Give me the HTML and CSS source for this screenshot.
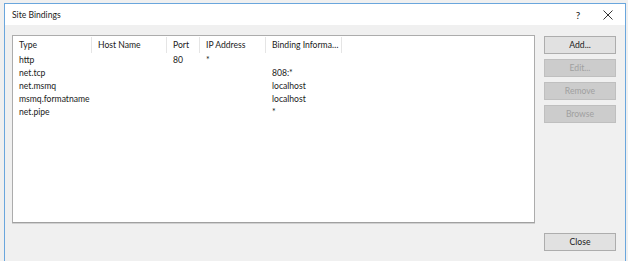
FILE: index.html
```html
<!DOCTYPE html>
<html lang="en">
<head>
    <meta charset="UTF-8">
    <title>Site Bindings</title>
    <link rel="stylesheet" href="styles.css">
</head>
<body>
    <div class="dialog">
        <div class="title-bar">
            <span class="title">Site Bindings</span>
            <span class="title-btn help">?</span>
            <span class="title-btn close-x">
                <svg width="10" height="10" viewBox="0 0 10 10"><path d="M0.5 0.5 L9.5 9.5 M9.5 0.5 L0.5 9.5" stroke="#333" stroke-width="1" fill="none"/></svg>
            </span>
        </div>
        <div class="body">
            <div class="main-row">
                <div class="list">
                    <div class="row header">
                        <span class="col c-type">Type</span>
                        <span class="col c-host">Host Name</span>
                        <span class="col c-port">Port</span>
                        <span class="col c-ip">IP Address</span>
                        <span class="col c-bind">Binding Informa…</span>
                    </div>
                    <div class="row"><span class="col c-type">http</span><span class="col c-host"></span><span class="col c-port">80</span><span class="col c-ip">*</span><span class="col c-bind"></span></div>
                    <div class="row"><span class="col c-type">net.tcp</span><span class="col c-host"></span><span class="col c-port"></span><span class="col c-ip"></span><span class="col c-bind">808:*</span></div>
                    <div class="row"><span class="col c-type">net.msmq</span><span class="col c-host"></span><span class="col c-port"></span><span class="col c-ip"></span><span class="col c-bind">localhost</span></div>
                    <div class="row"><span class="col c-type">msmq.formatname</span><span class="col c-host"></span><span class="col c-port"></span><span class="col c-ip"></span><span class="col c-bind">localhost</span></div>
                    <div class="row"><span class="col c-type">net.pipe</span><span class="col c-host"></span><span class="col c-port"></span><span class="col c-ip"></span><span class="col c-bind">*</span></div>
                </div>
                <div class="side-buttons">
                    <button class="btn">Add...</button>
                    <button class="btn" disabled>Edit...</button>
                    <button class="btn" disabled>Remove</button>
                    <button class="btn" disabled>Browse</button>
                </div>
            </div>
            <div class="footer">
                <button class="btn">Close</button>
            </div>
        </div>
    </div>
</body>
</html>
```

FILE: styles.css
```css
/* Reset */
* {
    margin: 0;
    padding: 0;
    box-sizing: border-box;
}

body {
    width: 628px;
    height: 261px;
    background: #f0f0f0;
    font-family: Lato, 'Noto Sans', Arial, sans-serif;
    font-size: 8.6px;
    color: #1a1a1a;
    padding: 3px 2px 0 4px;
    overflow: hidden;
}

/* Window frame */
.dialog {
    width: 622px;
    height: 258px;
    border: 1px solid #6aa6dd;
    border-bottom: none;
    background: #f0f0f0;
    display: flex;
    flex-direction: column;
}

.title-bar {
    height: 21px;
    background: #ffffff;
    display: flex;
    align-items: center;
    padding-left: 7px;
}

.title {
    flex: 1;
}

.title-btn {
    width: 30px;
    text-align: center;
    font-size: 10px;
}

.close-x {
    display: flex;
    justify-content: center;
    margin-right: 2px;
}

.body {
    flex: 1;
    padding: 10px 9px 0 7px;
    display: flex;
    flex-direction: column;
}

.main-row {
    display: flex;
    gap: 9px;
}

/* Binding list */
.list {
    width: 523px;
    height: 188px;
    background: #ffffff;
    border: 1px solid #acacac;
    border-bottom-color: #a0a0a0;
    box-shadow: 0 1px 0 #d0d0d0;
}

.row {
    display: flex;
    height: 13px;
    line-height: 13px;
}

.row.header {
    height: 16px;
    line-height: 16px;
    margin-top: 1px;
    margin-bottom: 1px;
}

.col {
    padding-left: 6px;
    white-space: nowrap;
}

.header .col {
    border-right: 1px solid #e5e5e5;
}

.c-type { width: 79px; }
.c-host { width: 75px; }
.c-port { width: 33px; }
.c-ip { width: 66px; }
.c-bind { width: 76px; }

/* Buttons */
.side-buttons {
    display: flex;
    flex-direction: column;
    gap: 5px;
    padding-top: 1px;
}

.btn {
    width: 72px;
    height: 18px;
    background: #e1e1e1;
    border: 1px solid #adadad;
    font-family: inherit;
    font-size: 8.6px;
    color: #1a1a1a;
}

.btn:disabled {
    background: #cccccc;
    border-color: #bfbfbf;
    color: #a0a0a0;
}

.footer {
    display: flex;
    justify-content: flex-end;
    margin-top: 10px;
}
```
